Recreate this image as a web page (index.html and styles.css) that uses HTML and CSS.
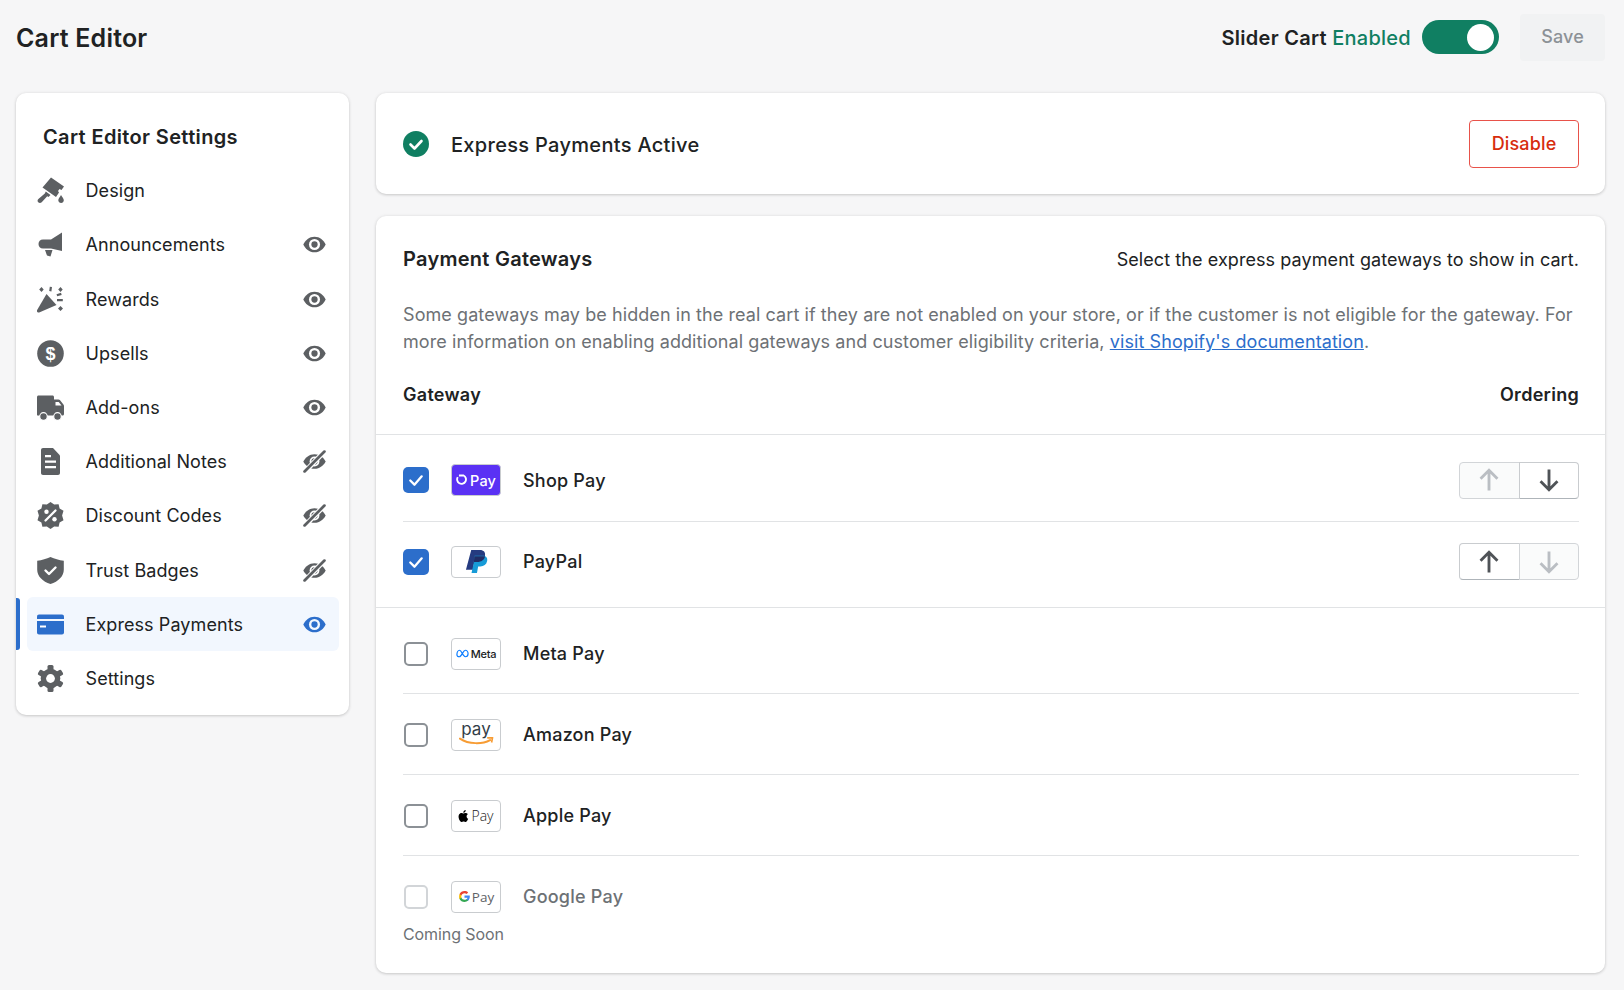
FILE: index.html
```html
<!DOCTYPE html>
<html lang="en">
<head>
    <meta charset="UTF-8">
    <meta name="viewport" content="width=device-width, initial-scale=1.0">
    <title>Cart Editor</title>
    <link rel="stylesheet" href="styles.css">
</head>
<body>
    <header class="topbar">
        <h1 class="page-title">Cart Editor</h1>
        <div class="topbar-actions">
            <span class="slider-label">Slider Cart <span class="enabled">Enabled</span></span>
            <span class="toggle"><span class="toggle-knob"></span></span>
            <button class="save-btn">Save</button>
        </div>
    </header>

    <div class="layout">
        <nav class="sidebar">
            <h2 class="sidebar-title">Cart Editor Settings</h2>

            <a class="nav-item">
                <svg class="nav-icon" viewBox="0 0 27 27"><path d="M14 .5l13 9-2.500 3.500-2-1-1.500 2 1 1.500-3 4.500-13.500-9.500z"/><path d="M8.800 14.500l4.700 3.500-2 2-1.300-.8-5.500 6c-1 1-2.500 1-3.500 0-.9-1-.8-2.400 .2-3.200l6.400-5.500z"/><path d="M24 18c1.200 1.900 2.800 3.500 2.800 5.300 0 1.500-1.200 2.700-2.700 2.700s-2.800-1.200-2.800-2.700c0-1.800 1.700-3.400 2.700-5.300z"/></svg>
                <span class="nav-label">Design</span>
            </a>
            <a class="nav-item">
                <svg class="nav-icon" viewBox="0 0 27 27"><path d="M25 1.500v18.500l-11-2.500h-8c-2.800 0-4.500-2-4.500-4.500s1.700-4.500 4.500-4.500h8z"/><path d="M8 19h7.500l-2 6.500-3.500-1z"/></svg>
                <span class="nav-label">Announcements</span>
                <svg class="eye" viewBox="0 0 22 16"><path d="M11 .5C6 .5 2.200 3.800 .3 8c1.900 4.200 5.700 7.500 10.700 7.500s8.800-3.300 10.700-7.500C19.800 3.800 16 .5 11 .5z"/><circle cx="11" cy="8" r="5.300" fill="#fff"/><circle cx="11" cy="8" r="3"/></svg>
            </a>
            <a class="nav-item">
                <svg class="nav-icon" viewBox="0 0 27 27"><path d="M9.500 8l10 11-17.300 7.500c-1.300 .5-2.700-.8-2.200-2.200z"/><path d="M4.500 1l2.200 2.500-2.200 2.500-2.300-2.500zM23.500 1l2.200 2.500-2.200 2.500-2.300-2.500zM23.500 20l2.500 2.500-2.500 2.500-2.500-2.500zM12.800 .8l2.200 .3-.6 4.300-2.200-.3zM19.500 8.200l4.500-1.400 .7 2.100-4.500 1.400zM20 13h5.800v2.300H20z"/></svg>
                <span class="nav-label">Rewards</span>
                <svg class="eye" viewBox="0 0 22 16"><path d="M11 .5C6 .5 2.200 3.800 .3 8c1.900 4.200 5.700 7.500 10.700 7.500s8.800-3.300 10.700-7.500C19.800 3.800 16 .5 11 .5z"/><circle cx="11" cy="8" r="5.300" fill="#fff"/><circle cx="11" cy="8" r="3"/></svg>
            </a>
            <a class="nav-item">
                <svg class="nav-icon" viewBox="0 0 27 27"><circle cx="13.500" cy="13.500" r="13.300"/><text class="icon-text" x="13.500" y="20" font-size="18">$</text></svg>
                <span class="nav-label">Upsells</span>
                <svg class="eye" viewBox="0 0 22 16"><path d="M11 .5C6 .5 2.200 3.800 .3 8c1.900 4.200 5.700 7.500 10.700 7.500s8.800-3.300 10.700-7.500C19.800 3.800 16 .5 11 .5z"/><circle cx="11" cy="8" r="5.300" fill="#fff"/><circle cx="11" cy="8" r="3"/></svg>
            </a>
            <a class="nav-item">
                <svg class="nav-icon" viewBox="0 0 27 27"><path d="M1.500 1.500h14c.8 0 1.500 .7 1.500 1.500v2.500h4.500c.6 0 1 .2 1.400 .6l3.500 4.400c.4 .4 .6 .9 .6 1.500v8c0 .8-.5 1.500-1.500 1.500H1.500C.7 22 0 21.300 0 20.500V3c0-.8 .7-1.500 1.500-1.500z"/><path d="M18.500 8h3.200l2.800 3.500h-6z" fill="#fff"/><circle cx="6.500" cy="22.500" r="3.800" stroke="#fff" stroke-width="1.200"/><circle cx="20.500" cy="22.500" r="3.800" stroke="#fff" stroke-width="1.200"/></svg>
                <span class="nav-label">Add-ons</span>
                <svg class="eye" viewBox="0 0 22 16"><path d="M11 .5C6 .5 2.200 3.800 .3 8c1.900 4.200 5.700 7.500 10.700 7.500s8.800-3.300 10.700-7.500C19.800 3.800 16 .5 11 .5z"/><circle cx="11" cy="8" r="5.300" fill="#fff"/><circle cx="11" cy="8" r="3"/></svg>
            </a>
            <a class="nav-item">
                <svg class="nav-icon" viewBox="0 0 27 27"><path d="M6 0h10l7 7.500V25c0 1.100-.9 2-2 2H6c-1.100 0-2-.9-2-2V2c0-1.100 .9-2 2-2z"/><path d="M8 7h6v2.200H8zM8 12.500h11v2.200H8zM8 18h11v2.200H8z" fill="#fff"/></svg>
                <span class="nav-label">Additional Notes</span>
                <svg class="eye" viewBox="0 0 22 22"><path d="M11 4C6 4 2.200 7.300 .3 11c1.900 3.700 5.700 7 10.700 7s8.800-3.300 10.700-7C19.800 7.300 16 4 11 4z"/><circle cx="11" cy="11" r="4.700" fill="#fff"/><circle cx="11" cy="11" r="3"/><path d="M2 20.500L20 2" stroke="#fff" stroke-width="4.800"/><path d="M1.500 20.500L20.500 1.500" stroke="#5c5f62" stroke-width="2.600" stroke-linecap="round"/></svg>
            </a>
            <a class="nav-item">
                <svg class="nav-icon" viewBox="0 0 27 27"><path d="M13.500 0l3.700 2.500 4.400-.3 1 4.300 3.900 2.300-1.400 4.700 1.400 4.700-3.900 2.300-1 4.300-4.400-.3-3.700 2.500-3.700-2.500-4.400 .3-1-4.300L.5 18.200l1.400-4.700L.5 8.800l3.900-2.300 1-4.300 4.400 .3z"/><circle cx="9.500" cy="9.800" r="2.200" fill="#fff"/><circle cx="17.500" cy="17.200" r="2.200" fill="#fff"/><path d="M8.500 18.500L18.500 8.500" stroke="#fff" stroke-width="2.300" stroke-linecap="round"/></svg>
                <span class="nav-label">Discount Codes</span>
                <svg class="eye" viewBox="0 0 22 22"><path d="M11 4C6 4 2.200 7.300 .3 11c1.900 3.700 5.700 7 10.700 7s8.800-3.300 10.700-7C19.800 7.300 16 4 11 4z"/><circle cx="11" cy="11" r="4.700" fill="#fff"/><circle cx="11" cy="11" r="3"/><path d="M2 20.500L20 2" stroke="#fff" stroke-width="4.800"/><path d="M1.500 20.500L20.500 1.500" stroke="#5c5f62" stroke-width="2.600" stroke-linecap="round"/></svg>
            </a>
            <a class="nav-item">
                <svg class="nav-icon" viewBox="0 0 27 27"><path d="M13.500 0c4 1.900 8.500 3.200 13.300 3.700v9c0 6.300-5.300 11.800-13.300 14.300C5.500 24.500 .2 19 .2 12.700v-9C5 3.200 9.500 1.900 13.500 0z"/><path d="M8.500 13.500l3.500 3.500 6.500-6.500" fill="none" stroke="#fff" stroke-width="2.400" stroke-linecap="round" stroke-linejoin="round"/></svg>
                <span class="nav-label">Trust Badges</span>
                <svg class="eye" viewBox="0 0 22 22"><path d="M11 4C6 4 2.200 7.300 .3 11c1.900 3.700 5.700 7 10.700 7s8.800-3.300 10.700-7C19.800 7.300 16 4 11 4z"/><circle cx="11" cy="11" r="4.700" fill="#fff"/><circle cx="11" cy="11" r="3"/><path d="M2 20.500L20 2" stroke="#fff" stroke-width="4.800"/><path d="M1.500 20.500L20.500 1.500" stroke="#5c5f62" stroke-width="2.600" stroke-linecap="round"/></svg>
            </a>
            <a class="nav-item active">
                <svg class="nav-icon" viewBox="0 0 27 27"><path d="M2 3.500h23c1.100 0 2 .9 2 2V8H0V5.500c0-1.100 .9-2 2-2z"/><path d="M0 10h27v11.500c0 1.100-.9 2-2 2H2c-1.100 0-2-.9-2-2z"/><path d="M3 14.500h6v2H3z" fill="#fff"/></svg>
                <span class="nav-label">Express Payments</span>
                <svg class="eye" viewBox="0 0 22 16"><path d="M11 .5C6 .5 2.200 3.800 .3 8c1.900 4.200 5.700 7.500 10.700 7.500s8.800-3.300 10.700-7.500C19.800 3.800 16 .5 11 .5z"/><circle cx="11" cy="8" r="5.300" fill="#f2f7fe"/><circle cx="11" cy="8" r="3"/></svg>
            </a>
            <a class="nav-item">
                <svg class="nav-icon" viewBox="0 0 27 27"><g><rect x="10.500" y="0" width="6" height="27" rx="1.500"/><rect x="10.500" y="0" width="6" height="27" rx="1.500" transform="rotate(60 13.500 13.500)"/><rect x="10.500" y="0" width="6" height="27" rx="1.500" transform="rotate(120 13.500 13.500)"/></g><circle cx="13.500" cy="13.500" r="9.800"/><circle cx="13.500" cy="13.500" r="4.400" fill="#fff"/></svg>
                <span class="nav-label">Settings</span>
            </a>
        </nav>

        <main class="content">
            <section class="card status-card">
                <svg class="status-check" viewBox="0 0 26 26"><circle cx="13" cy="13" r="13"/><path d="M7.500 13.500l4 4 7-7.500" fill="none" stroke="#fff" stroke-width="2.600" stroke-linecap="round" stroke-linejoin="round"/></svg>
                <span class="status-text">Express Payments Active</span>
                <button class="disable-btn">Disable</button>
            </section>

            <section class="card gateways-card">
                <div class="gateways-intro">
                    <div class="split-row">
                        <h2 class="card-title">Payment Gateways</h2>
                        <span class="card-hint">Select the express payment gateways to show in cart.</span>
                    </div>
                    <p class="card-desc">Some gateways may be hidden in the real cart if they are not enabled on your store, or if the customer is not eligible for the gateway. For more information on enabling additional gateways and customer eligibility criteria, <a class="doc-link">visit Shopify's documentation</a>.</p>
                    <div class="split-row col-heads">
                        <span>Gateway</span>
                        <span>Ordering</span>
                    </div>
                </div>

                <div class="gateway-group selected">
                    <div class="gateway-row">
                        <span class="checkbox checked"><svg viewBox="0 0 25 25"><path d="M7 13l4 4 7-8" fill="none" stroke="#fff" stroke-width="2.200" stroke-linecap="round" stroke-linejoin="round"/></svg></span>
                        <span class="logo logo-shop">
                            <svg viewBox="0 0 13 13" class="shop-mark"><path d="M3.200 1.600h5a4.800 4.800 0 1 1-6.300 1.800" fill="none" stroke="#fff" stroke-width="2"/></svg>
                            <span>Pay</span>
                        </span>
                        <span class="gateway-name">Shop Pay</span>
                        <div class="order-btns">
                            <button class="order-btn" disabled><svg viewBox="0 0 20 20"><path d="M10 18V2.500M3.500 9L10 2.500 16.500 9"/></svg></button>
                            <button class="order-btn"><svg viewBox="0 0 20 20"><path d="M10 2v15.500M3.500 11l6.500 6.500 6.500-6.500"/></svg></button>
                        </div>
                    </div>
                    <div class="gateway-row">
                        <span class="checkbox checked"><svg viewBox="0 0 25 25"><path d="M7 13l4 4 7-8" fill="none" stroke="#fff" stroke-width="2.200" stroke-linecap="round" stroke-linejoin="round"/></svg></span>
                        <span class="logo">
                            <svg viewBox="0 0 24 26" class="paypal-mark"><path d="M6.500 1h9c4 0 6.200 2.400 5.300 6.300-.9 4.300-4 6.300-8 6.300H9.600L8.300 21.500H1z" fill="#253b80"/><path d="M10 7h8.500c3.500 0 5.300 2.200 4.600 5.500-.8 3.800-3.500 5.700-7 5.700h-2.400L12.500 25H6.800l2-9z" fill="#179bd7"/><path d="M9.800 7.500h8.800c.9 0 1.700 .2 2.300 .4-.8 3.800-4 5.700-8 5.700H9.600l-.6 2.700z" fill="#222d65"/></svg>
                        </span>
                        <span class="gateway-name">PayPal</span>
                        <div class="order-btns">
                            <button class="order-btn"><svg viewBox="0 0 20 20"><path d="M10 18V2.500M3.500 9L10 2.500 16.500 9"/></svg></button>
                            <button class="order-btn" disabled><svg viewBox="0 0 20 20"><path d="M10 2v15.500M3.500 11l6.500 6.500 6.500-6.500"/></svg></button>
                        </div>
                    </div>
                </div>

                <div class="gateway-group unselected">
                    <div class="gateway-row">
                        <span class="checkbox"></span>
                        <span class="logo">
                            <svg viewBox="0 0 14 9" class="meta-mark"><path d="M1 5.800C1 3 2.300 1 3.800 1c2.400 0 3.500 7 6.300 7 1.600 0 2.900-1.200 2.900-3.200C13 2.600 11.700 1 10.100 1 7.500 1 6.300 8 3.500 8 2 8 1 7.200 1 5.800z" fill="none" stroke="#0a7cff" stroke-width="1.300"/></svg>
                            <span class="logo-meta-text">Meta</span>
                        </span>
                        <span class="gateway-name">Meta Pay</span>
                    </div>
                    <div class="gateway-row">
                        <span class="checkbox"></span>
                        <span class="logo logo-amazon">
                            <span class="amazon-text">pay</span>
                            <svg viewBox="0 0 36 9" class="amazon-smile"><path d="M1 1.500c9 6 23 6 31 1.500" fill="none" stroke="#f79c34" stroke-width="2" stroke-linecap="round"/><path d="M29 .8l5.500-.3-1 5" fill="none" stroke="#f79c34" stroke-width="1.700" stroke-linejoin="round"/></svg>
                        </span>
                        <span class="gateway-name">Amazon Pay</span>
                    </div>
                    <div class="gateway-row">
                        <span class="checkbox"></span>
                        <span class="logo logo-tight">
                            <svg viewBox="0 0 14 16" class="apple-mark"><path d="M10 8.500c0-1.700 1.300-2.500 1.500-2.600-.8-1.200-2.100-1.400-2.500-1.400-1.100-.1-2.100 .6-2.600 .6-.6 0-1.400-.6-2.300-.6C2.900 4.500 1.800 5.200 1.200 6.300 0 8.400 .9 11.500 2 13.200c.6 .8 1.300 1.800 2.200 1.700.9 0 1.200-.6 2.300-.6s1.400 .6 2.300 .6c1 0 1.600-.9 2.100-1.700 .7-1 1-1.900 1-2-.1 0-1.900-.7-1.900-2.700zM8.300 3.300c.5-.6 .8-1.400 .7-2.300-.7 0-1.600 .5-2.100 1.100-.5 .5-.9 1.400-.8 2.200 .8 .1 1.700-.4 2.200-1z"/></svg>
                            <span class="logo-thin">Pay</span>
                        </span>
                        <span class="gateway-name">Apple Pay</span>
                    </div>
                    <div class="gateway-row last">
                        <span class="checkbox disabled"></span>
                        <span class="logo logo-tight">
                            <svg viewBox="0 0 24 24" class="google-mark"><path d="M21.800 12.200c0-.7-.1-1.400-.2-2H12v3.900h5.500c-.2 1.300-1 2.400-2 3.100v2.600h3.300c1.900-1.800 3-4.400 3-7.600z" fill="#4285f4"/><path d="M12 22c2.700 0 5-.9 6.800-2.400l-3.300-2.600c-.9 .6-2.100 1-3.500 1-2.700 0-4.900-1.800-5.700-4.200H2.900v2.600C4.600 19.800 8 22 12 22z" fill="#34a853"/><path d="M6.300 13.800c-.4-1.200-.4-2.500 0-3.700V7.500H2.900c-1.200 2.800-1.200 6.100 0 8.900z" fill="#fbbc04"/><path d="M12 6c1.500 0 2.800 .5 3.900 1.500l2.900-2.900C17 2.900 14.700 2 12 2 8 2 4.600 4.200 2.900 7.500l3.400 2.600C7.100 7.800 9.300 6 12 6z" fill="#ea4335"/></svg>
                            <span class="logo-thin grey">Pay</span>
                        </span>
                        <span class="gateway-name muted">Google Pay</span>
                    </div>
                    <p class="coming-soon">Coming Soon</p>
                </div>
            </section>
        </main>
    </div>
</body>
</html>
```

FILE: styles.css
```css
* {
    box-sizing: border-box;
}
body {
    margin: 0;
    height: 990px;
    overflow: hidden;
    background-color: #f6f6f7;
    color: #202223;
    font-family: Inter, "Noto Sans", sans-serif;
    font-size: 18px;
    letter-spacing: 0.08px;
}
button {
    font-family: inherit;
}
.topbar {
    display: flex;
    justify-content: space-between;
    align-items: center;
    height: 48px;
    margin: 13px 19px 32px 16px;
}
.page-title {
    margin: 2px 0 0;
    font-size: 25px;
    font-weight: 600;
    letter-spacing: 0.2px;
}
.topbar-actions {
    display: flex;
    align-items: center;
}
.slider-label {
    margin: 1px 11px 0 0;
    font-size: 20px;
    font-weight: 600;
    letter-spacing: 0.27px;
}
.enabled {
    color: #107f62;
    font-weight: 500;
}
.toggle {
    display: flex;
    justify-content: flex-end;
    align-items: center;
    width: 77px;
    height: 34px;
    padding-right: 5px;
    border-radius: 17px;
    background-color: #107f62;
}
.toggle-knob {
    width: 27px;
    height: 27px;
    border-radius: 50%;
    background-color: #fff;
}
.save-btn {
    width: 85px;
    height: 47px;
    margin-left: 21px;
    padding-bottom: 2px;
    border: none;
    border-radius: 4px;
    background-color: #f1f2f3;
    color: #8c9196;
    font-size: 18px;
    font-weight: 500;
    letter-spacing: 0.15px;
}
.layout {
    display: grid;
    grid-template-columns: 333px 1229px;
    gap: 27px;
    align-items: start;
    margin-left: 16px;
}
.sidebar,
.card {
    background-color: #fff;
    border-radius: 10px;
    box-shadow: 0 0 4px rgba(23, 24, 24, 0.06), 0 1px 3px rgba(0, 0, 0, 0.16);
}
.sidebar {
    position: relative;
    padding: 28px 10px 10px 11px;
}
.sidebar-title {
    margin: 0 0 10.600px 16px;
    font-size: 20px;
    line-height: 32px;
    font-weight: 600;
    letter-spacing: 0.36px;
}
.nav-item {
    position: relative;
    display: flex;
    align-items: center;
    height: 54.200px;
    padding: 0 13px 0 10px;
    border-radius: 6px;
}
.nav-icon {
    flex: none;
    width: 27px;
    height: 27px;
    fill: #5c5f62;
}
.icon-text {
    fill: #fff;
    font-family: "Liberation Sans", sans-serif;
    font-weight: 700;
    text-anchor: middle;
}
.nav-label {
    flex: 1;
    margin-left: 21.500px;
}
.eye {
    flex: none;
    width: 23px;
    height: 23px;
    fill: #5c5f62;
}
.nav-item.active {
    background-color: #f2f7fe;
}
.nav-item.active::before {
    content: "";
    position: absolute;
    left: -11px;
    top: 1px;
    bottom: 1px;
    width: 4px;
    border-radius: 0 3px 3px 0;
    background-color: #2c6ecb;
}
.nav-item.active .nav-icon,
.nav-item.active .eye {
    fill: #2c6ecb;
}
.content {
    display: flex;
    flex-direction: column;
    gap: 22px;
}
.status-card {
    display: flex;
    align-items: center;
    height: 101px;
    padding: 0 26px 0 27px;
}
.status-check {
    width: 26px;
    height: 26px;
    fill: #107f62;
}
.status-text {
    flex: 1;
    margin: 2px 0 0 22px;
    font-size: 20px;
    font-weight: 500;
    letter-spacing: 0.31px;
}
.disable-btn {
    width: 110px;
    height: 48px;
    border: 1px solid #e8524a;
    border-radius: 4px;
    background-color: #fff;
    color: #d72c0d;
    font-size: 18px;
    font-weight: 500;
    letter-spacing: 0.15px;
}
.gateways-intro {
    padding: 27px 26px 26px 27px;
    border-bottom: 1px solid #e1e3e5;
}
.split-row {
    display: flex;
    justify-content: space-between;
    align-items: center;
}
.card-title {
    margin: 0;
    font-size: 20px;
    line-height: 32px;
    font-weight: 600;
    letter-spacing: 0.26px;
}
.card-desc {
    margin: 26px 0 0;
    line-height: 27px;
    color: #6d7175;
}
.doc-link {
    color: #2c6ecb;
    text-decoration: underline;
}
.col-heads {
    margin-top: 26px;
    line-height: 27px;
    font-weight: 600;
    letter-spacing: 0.28px;
}
.gateway-group {
    padding: 5px 26px 5px 27px;
}
.gateway-group.selected {
    padding-top: 6px;
    padding-bottom: 4px;
    border-bottom: 1px solid #e1e3e5;
}
.gateway-row {
    display: flex;
    align-items: center;
    height: 81px;
    border-bottom: 1px solid #e1e3e5;
}
.selected .gateway-row {
    padding-bottom: 2px;
}
.unselected .gateway-row {
    padding-top: 1px;
}
.gateway-group > .gateway-row:last-of-type,
.gateway-group .last {
    border-bottom: none;
}
.gateway-row.last {
    height: 80px;
}
.checkbox {
    flex: none;
    width: 24px;
    height: 24px;
    margin: 0 1px;
    border: 2px solid #8c9196;
    border-radius: 5px;
    background-color: #fff;
}
.checkbox svg {
    display: block;
    width: 100%;
    height: 100%;
}
.checkbox.checked {
    width: 26px;
    height: 26px;
    margin: 0;
    border: none;
    background-color: #2c6ecb;
}
.checkbox.disabled {
    border-color: #d2d5d8;
}
.logo {
    flex: none;
    display: flex;
    justify-content: center;
    align-items: center;
    gap: 2px;
    width: 50px;
    height: 32px;
    margin-left: 22px;
    border: 1px solid #c9cccf;
    border-radius: 4px;
    background-color: #fff;
}
.logo-tight {
    gap: 1px;
}
.logo-shop {
    background-color: #5a31f4;
    color: #fff;
    font-size: 14.500px;
    font-weight: 500;
}
.shop-mark {
    width: 12px;
    height: 12px;
}
.paypal-mark {
    width: 23px;
    height: 25px;
}
.meta-mark {
    width: 13px;
    height: 9px;
}
.logo-meta-text {
    font-size: 11px;
    font-weight: 500;
    letter-spacing: -0.2px;
}
.logo-amazon {
    flex-direction: column;
    gap: 0;
}
.amazon-text {
    margin-top: -2px;
    font-size: 17px;
    line-height: 16px;
    color: #333e48;
}
.amazon-smile {
    width: 35px;
    height: 9px;
}
.apple-mark {
    width: 12px;
    height: 14px;
}
.google-mark {
    width: 13px;
    height: 13px;
}
.logo-thin {
    font-family: "Open Sans", sans-serif;
    font-size: 14px;
    font-weight: 300;
    letter-spacing: 0;
    color: #222;
}
.logo-thin.grey {
    color: #5f6368;
    font-weight: 400;
    font-size: 13.500px;
}
.gateway-name {
    flex: 1;
    margin-left: 22px;
    font-weight: 500;
    letter-spacing: 0.22px;
}
.gateway-name.muted {
    color: #6d7175;
}
.order-btns {
    display: flex;
    width: 120px;
    height: 37px;
}
.order-btn {
    flex: 1;
    display: flex;
    justify-content: center;
    align-items: center;
    padding: 0;
    border: 1px solid #c9cccf;
    border-bottom-color: #aeb4b9;
    background-color: #fff;
}
.order-btn:first-child {
    border-radius: 4px 0 0 4px;
}
.order-btn:last-child {
    margin-left: -1px;
    border-radius: 0 4px 4px 0;
}
.order-btn svg {
    width: 26px;
    height: 26px;
    fill: none;
    stroke: #4f5357;
    stroke-width: 2.200;
}
.order-btn:disabled {
    border-color: #d2d5d8;
    background-color: #fafbfb;
}
.order-btn:disabled svg {
    stroke: #babec3;
}
.coming-soon {
    margin: -14px 0 22px;
    font-size: 16px;
    line-height: 24px;
    letter-spacing: -0.1px;
    color: #6d7175;
}
```
